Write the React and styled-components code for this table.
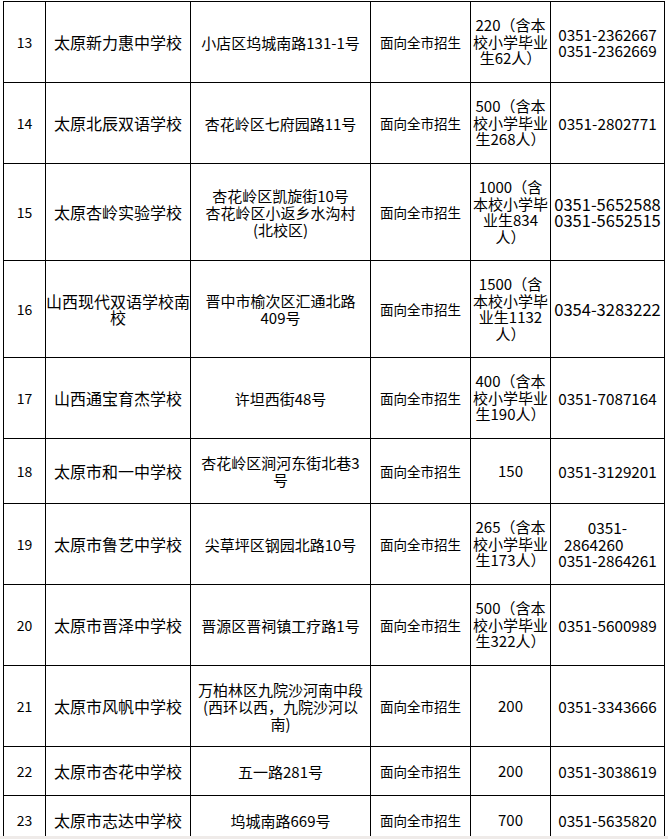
import React from "react";
import styled, { createGlobalStyle } from "styled-components";

const GlobalStyle = createGlobalStyle`
  html, body {
    margin: 0;
    padding: 0;
    background: #efebe9;
  }
  body {
    font-family: "Noto Sans CJK SC", "Noto Sans", sans-serif;
    color: #000;
  }
`;

const columns = [42, 145, 180, 100, 80, 114];

const rows = [
  {
    no: 13,
    name: "太原新力惠中学校",
    addr: "小店区坞城南路131-1号",
    count: "220（含本\n校小学毕业\n生62人）",
    phone: "0351-2362667\n0351-2362669",
    h: 81,
  },
  {
    no: 14,
    name: "太原北辰双语学校",
    addr: "杏花岭区七府园路11号",
    count: "500（含本\n校小学毕业\n生268人）",
    phone: "0351-2802771",
    h: 81,
  },
  {
    no: 15,
    name: "太原杏岭实验学校",
    addr: "杏花岭区凯旋街10号\n杏花岭区小返乡水沟村\n(北校区)",
    count: "1000（含\n本校小学毕\n业生834\n人）",
    phone: "0351-5652588\n0351-5652515",
    h: 97,
    big: true,
  },
  {
    no: 16,
    name: "山西现代双语学校南\n校",
    addr: "晋中市榆次区汇通北路\n409号",
    count: "1500（含\n本校小学毕\n业生1132\n人）",
    phone: "0354-3283222",
    h: 97,
    big: true,
  },
  {
    no: 17,
    name: "山西通宝育杰学校",
    addr: "许坦西街48号",
    count: "400（含本\n校小学毕业\n生190人）",
    phone: "0351-7087164",
    h: 81,
  },
  {
    no: 18,
    name: "太原市和一中学校",
    addr: "杏花岭区涧河东街北巷3\n号",
    count: "150",
    phone: "0351-3129201",
    h: 65,
  },
  {
    no: 19,
    name: "太原市鲁艺中学校",
    addr: "尖草坪区钢园北路10号",
    count: "265（含本\n校小学毕业\n生173人）",
    phone: "0351-\n2864260\u00a0\u00a0\u00a0\u00a0\u00a0\u00a0\u00a0\u00a0\n0351-2864261",
    h: 81,
  },
  {
    no: 20,
    name: "太原市晋泽中学校",
    addr: "晋源区晋祠镇工疗路1号",
    count: "500（含本\n校小学毕业\n生322人）",
    phone: "0351-5600989",
    h: 81,
  },
  {
    no: 21,
    name: "太原市风帆中学校",
    addr: "万柏林区九院沙河南中段\n(西环以西，九院沙河以\n南)",
    count: "200",
    phone: "0351-3343666",
    h: 81,
  },
  {
    no: 22,
    name: "太原市杏花中学校",
    addr: "五一路281号",
    count: "200",
    phone: "0351-3038619",
    h: 49,
  },
  {
    no: 23,
    name: "太原市志达中学校",
    addr: "坞城南路669号",
    count: "700",
    phone: "0351-5635820",
    h: 49,
  },
];

function Lines({ text }) {
  return text.split("\n").map((t, i) => <Line key={i}>{t}</Line>);
}

function App() {
  return (
    <Page>
      <GlobalStyle />
      <Table>
        <colgroup>
          {columns.map((w, i) => (
            <Col key={i} $w={w} />
          ))}
        </colgroup>
        <tbody>
          {rows.map((r) => (
            <Row key={r.no} $h={r.h}>
              <Cell $kind="no">{r.no}</Cell>
              <Cell $kind="name">
                <Lines text={r.name} />
              </Cell>
              <Cell $kind="addr">
                <Lines text={r.addr} />
              </Cell>
              <Cell $kind="type">面向全市招生</Cell>
              <Cell $kind="count">
                <Lines text={r.count} />
              </Cell>
              <Cell $kind="phone" $big={r.big}>
                <Lines text={r.phone} />
              </Cell>
            </Row>
          ))}
        </tbody>
      </Table>
    </Page>
  );
}

export default App;

const sizes = {
  no: "14px",
  name: "16px",
  addr: "15px",
  type: "13.5px",
  count: "15px",
  phone: "15.3px",
};

const leading = {
  no: "16px",
  name: "16px",
  addr: "17px",
  type: "16px",
  count: "16.5px",
  phone: "16.5px",
};

const Page = styled.div`
  width: 668px;
  height: 836px;
  overflow: hidden;
  background: #fff;
  padding: 1px 0 0 3px;
  box-sizing: border-box;
`;

const Table = styled.table`
  border-collapse: collapse;
  table-layout: fixed;
  width: 662px;
`;

const Col = styled.col`
  width: ${(p) => p.$w}px;
`;

const Row = styled.tr`
  height: ${(p) => p.$h}px;
`;

const Cell = styled.td`
  border: 1px solid #000;
  padding: 0;
  text-align: center;
  vertical-align: middle;
  font-size: ${(p) => (p.$big ? "16.5px" : sizes[p.$kind])};
  line-height: ${(p) => leading[p.$kind]};
  color: #000;
`;

const Line = styled.div`
  white-space: nowrap;
`;
